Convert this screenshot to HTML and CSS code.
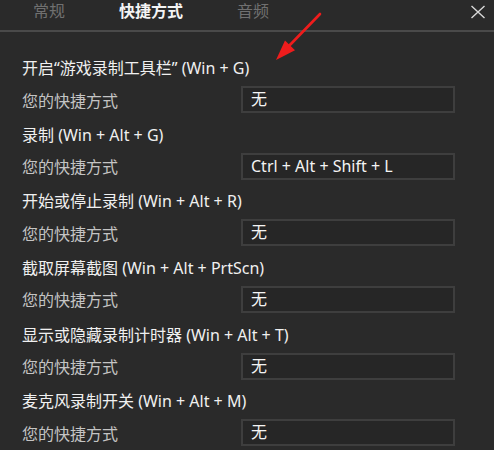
FILE: index.html
```html
<!DOCTYPE html>
<html lang="zh-CN">
<head>
<meta charset="utf-8">
<title>快捷方式</title>
<link rel="stylesheet" href="styles.css">
</head>
<body>
<div class="window">
  <header class="tabs">
    <span class="tab">常规</span>
    <span class="tab active">快捷方式</span>
    <span class="tab">音频</span>
    <svg class="close" width="16" height="14" viewBox="0 0 16 14"><path d="M1.5 1 L14.5 13 M14.5 1 L1.5 13" stroke="#d8d8d8" stroke-width="1.4" fill="none"/></svg>
  </header>
  <main class="list">
    <section class="item">
      <div class="title">开启“游戏录制工具栏” (Win + G)</div>
      <div class="row"><span class="label">您的快捷方式</span><div class="box">无</div></div>
    </section>
    <section class="item">
      <div class="title">录制 (Win + Alt + G)</div>
      <div class="row"><span class="label">您的快捷方式</span><div class="box">Ctrl + Alt + Shift + L</div></div>
    </section>
    <section class="item">
      <div class="title">开始或停止录制 (Win + Alt + R)</div>
      <div class="row"><span class="label">您的快捷方式</span><div class="box">无</div></div>
    </section>
    <section class="item">
      <div class="title">截取屏幕截图 (Win + Alt + PrtScn)</div>
      <div class="row"><span class="label">您的快捷方式</span><div class="box">无</div></div>
    </section>
    <section class="item">
      <div class="title">显示或隐藏录制计时器 (Win + Alt + T)</div>
      <div class="row"><span class="label">您的快捷方式</span><div class="box">无</div></div>
    </section>
    <section class="item">
      <div class="title">麦克风录制开关 (Win + Alt + M)</div>
      <div class="row"><span class="label">您的快捷方式</span><div class="box">无</div></div>
    </section>
  </main>
  <svg class="arrow" width="494" height="450" viewBox="0 0 494 450">
    <path d="M320 14 L287 48" stroke="#ee1c1c" stroke-width="2.6" stroke-linecap="round" fill="none"/>
    <path d="M276 60 L285 40.6 L295 50.2 Z" fill="#ee1c1c"/>
  </svg>
</div>
</body>
</html>
```
FILE: styles.css
```css
html, body {
  margin: 0;
  padding: 0;
  background: #2a2a2a;
}
body {
  font-family: "Noto Sans", "Noto Sans CJK SC", sans-serif;
  font-size: 16px;
  color: #eeeeee;
}
.window {
  position: relative;
  width: 494px;
  height: 450px;
  overflow: hidden;
}
.tabs {
  display: flex;
  align-items: flex-start;
  height: 30px;
  padding: 0 8px 0 33px;
  border-bottom: 2px solid #4a4a4a;
}
.tab {
  line-height: 22px;
  margin-right: 54px;
  color: #707070;
}
.tab.active {
  color: #f4f4f4;
  font-weight: bold;
}
.close {
  margin-left: auto;
  margin-top: 5px;
}
.list {
  display: flex;
  flex-direction: column;
  gap: 6.67px;
  padding: 21px 0 0 22px;
}
.item {
  display: flex;
  flex-direction: column;
  gap: 3px;
}
.title {
  height: 30px;
  line-height: 30px;
  color: #f0f0f0;
  white-space: nowrap;
}
.row {
  display: flex;
  height: 27px;
  align-items: center;
}
.label {
  width: 219px;
  color: #c4c4c4;
}
.box {
  box-sizing: border-box;
  width: 214px;
  height: 27px;
  line-height: 23px;
  padding-left: 8px;
  border: 2px solid #3e3e3e;
  background: #262626;
  color: #f4f4f4;
  white-space: nowrap;
}
.arrow {
  position: absolute;
  left: 0;
  top: 0;
  pointer-events: none;
}
```
